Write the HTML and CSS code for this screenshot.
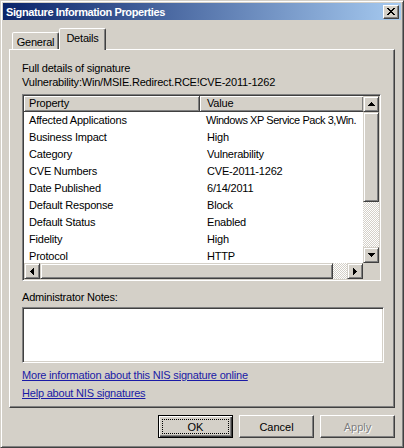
FILE: index.html
```html
<!DOCTYPE html>
<html lang="en">
<head>
  <meta charset="UTF-8" />
  <title>Signature Information Properties</title>
  <link rel="stylesheet" href="styles.css">
</head>
<body>
  <div class="window">
    <div class="titlebar">
      <span class="title">Signature Information Properties</span>
      <button class="close-btn" aria-label="Close">
        <svg width="8" height="7" viewBox="0 0 8 7" shape-rendering="crispEdges">
          <path d="M0 0h2v1h-2zM6 0h2v1h-2zM1 1h2v1h-2zM5 1h2v1h-2zM2 2h4v1h-4zM3 3h2v1h-2zM2 4h4v1h-4zM1 5h2v1h-2zM5 5h2v1h-2zM0 6h2v1h-2zM6 6h2v1h-2z" fill="#000"/>
        </svg>
      </button>
    </div>

    <div class="dialog">
      <div class="tabs">
        <div class="tab">General</div>
        <div class="tab active">Details</div>
      </div>

      <div class="panel">
        <p class="intro">Full details of signature<br>Vulnerability:Win/MSIE.Redirect.RCE!CVE-2011-1262</p>

        <div class="listview">
          <div class="list-body">
            <div class="list-row list-head">
              <div class="cell prop">Property</div>
              <div class="cell val">Value</div>
            </div>
            <div class="list-row"><div class="cell prop">Affected Applications</div><div class="cell val tight">Windows XP Service Pack 3,Win.</div></div>
            <div class="list-row"><div class="cell prop">Business Impact</div><div class="cell val">High</div></div>
            <div class="list-row"><div class="cell prop">Category</div><div class="cell val">Vulnerability</div></div>
            <div class="list-row"><div class="cell prop">CVE Numbers</div><div class="cell val">CVE-2011-1262</div></div>
            <div class="list-row"><div class="cell prop">Date Published</div><div class="cell val">6/14/2011</div></div>
            <div class="list-row"><div class="cell prop">Default Response</div><div class="cell val">Block</div></div>
            <div class="list-row"><div class="cell prop">Default Status</div><div class="cell val">Enabled</div></div>
            <div class="list-row"><div class="cell prop">Fidelity</div><div class="cell val">High</div></div>
            <div class="list-row"><div class="cell prop">Protocol</div><div class="cell val">HTTP</div></div>
          </div>

          <div class="vscroll">
            <div class="sb-btn">
              <svg width="7" height="4" viewBox="0 0 7 4" shape-rendering="crispEdges"><path d="M3 0h1v1h-1zM2 1h3v1h-3zM1 2h5v1h-5zM0 3h7v1h-7z" fill="#000"/></svg>
            </div>
            <div class="sb-thumb v"></div>
            <div class="sb-track"></div>
            <div class="sb-btn">
              <svg width="7" height="4" viewBox="0 0 7 4" shape-rendering="crispEdges"><path d="M0 0h7v1h-7zM1 1h5v1h-5zM2 2h3v1h-3zM3 3h1v1h-1z" fill="#000"/></svg>
            </div>
          </div>

          <div class="hscroll">
            <div class="sb-btn">
              <svg width="4" height="7" viewBox="0 0 4 7" shape-rendering="crispEdges"><path d="M0 3h1v1h-1zM1 2h1v3h-1zM2 1h1v5h-1zM3 0h1v7h-1z" fill="#000"/></svg>
            </div>
            <div class="sb-thumb h"></div>
            <div class="sb-track"></div>
            <div class="sb-btn">
              <svg width="4" height="7" viewBox="0 0 4 7" shape-rendering="crispEdges"><path d="M0 0h1v7h-1zM1 1h1v5h-1zM2 2h1v3h-1zM3 3h1v1h-1z" fill="#000"/></svg>
            </div>
          </div>

          <div class="sb-corner"></div>
        </div>

        <div class="notes-label">Administrator Notes:</div>
        <div class="notes"></div>

        <a class="link first" href="#">More information about this NIS signature online</a>
        <a class="link" href="#">Help about NIS signatures</a>
      </div>

      <div class="buttons">
        <button class="btn default"><span>OK</span></button>
        <button class="btn"><span>Cancel</span></button>
        <button class="btn disabled"><span>Apply</span></button>
      </div>
    </div>
  </div>
</body>
</html>
```

FILE: styles.css
```css
:root {
  --face: #d4d0c8;
  --light: #ffffff;
  --shadow: #808080;
  --dark: #404040;
  --link: #1a1aa6;
}

* {
  margin: 0;
  padding: 0;
  box-sizing: border-box;
}

body {
  font-family: "Liberation Sans", Arial, sans-serif;
  font-size: 11px;
  line-height: 14px;
  letter-spacing: -0.2px;
  color: #000;
  background: var(--face);
}

.window {
  width: 404px;
  height: 448px;
  padding: 2px;
  background: var(--face);
  border: 1px solid;
  border-color: var(--face) var(--dark) var(--dark) var(--face);
  box-shadow: inset 1px 1px var(--light), inset -1px -1px var(--shadow);
}

.titlebar {
  display: flex;
  align-items: center;
  justify-content: space-between;
  height: 17px;
  padding: 0 2px 0 3px;
  background: linear-gradient(to right, #0a246a, #a6caf0);
}

.title {
  color: #fff;
  font-weight: bold;
  letter-spacing: -0.4px;
}

.close-btn {
  display: flex;
  align-items: center;
  justify-content: center;
  width: 16px;
  height: 14px;
  background: var(--face);
  border: 1px solid;
  border-color: var(--light) var(--dark) var(--dark) var(--light);
  box-shadow: inset -1px -1px var(--shadow);
}

.dialog {
  padding: 0 6px;
}

/* tab strip */
.tabs {
  display: flex;
  align-items: flex-end;
  height: 29px;
  padding-top: 8px;
}

.tab {
  width: 47px;
  height: 17px;
  line-height: 18px;
  text-align: center;
  background: var(--face);
  border: 1px solid;
  border-bottom: none;
  border-color: var(--light) var(--dark) transparent var(--light);
  border-radius: 2px 2px 0 0;
  box-shadow: inset -1px 0 var(--shadow);
}

.tab:first-child {
  margin-left: 3px;
}

.tab.active {
  position: relative;
  z-index: 1;
  height: 22px;
  margin-bottom: -1px;
  line-height: 18px;
}

/* property page */
.panel {
  height: 359px;
  padding: 11px 8px 0 12px;
  background: var(--face);
  border: 1px solid;
  border-color: var(--light) var(--dark) var(--dark) var(--light);
  box-shadow: inset -1px -1px var(--shadow);
}

.intro {
  line-height: 14px;
}

.listview {
  display: grid;
  grid-template-columns: 1fr 16px;
  grid-template-rows: 1fr 16px;
  width: 359px;
  height: 187px;
  margin-top: 5px;
  background: #fff;
  border: 1px solid;
  border-color: var(--shadow) var(--light) var(--light) var(--shadow);
  box-shadow: inset 1px 1px var(--dark), inset -1px -1px var(--face);
  padding: 1px;
}

.list-body {
  overflow: hidden;
  background: #fff;
}

.list-row {
  display: flex;
  height: 17px;
  line-height: 17px;
  white-space: nowrap;
}

.cell {
  overflow: hidden;
}

.cell.prop {
  width: 176px;
  flex: none;
  padding-left: 5px;
}

.cell.val {
  flex: 1;
  padding-left: 7px;
}

.cell.tight {
  padding-left: 6px;
  letter-spacing: -0.45px;
}

.list-head {
  height: 16px;
  line-height: 15px;
}

.list-head .cell {
  background: var(--face);
  border-right: 1px solid var(--dark);
  border-bottom: 1px solid var(--dark);
  box-shadow: inset 1px 1px var(--light), inset -1px -1px var(--shadow);
}

.list-head .cell.val {
  border-right: none;
}

/* scroll bars */
.vscroll,
.hscroll {
  display: flex;
}

.vscroll {
  flex-direction: column;
}

.sb-btn,
.sb-thumb {
  display: flex;
  align-items: center;
  justify-content: center;
  flex: none;
  width: 16px;
  height: 16px;
  background: var(--face);
  border: 1px solid;
  border-color: var(--face) var(--dark) var(--dark) var(--face);
  box-shadow: inset 1px 1px var(--light), inset -1px -1px var(--shadow);
}

.sb-thumb.v {
  height: 90px;
}

.sb-thumb.h {
  width: 293px;
}

.sb-track {
  flex: 1;
  background-image: conic-gradient(#fff 25%, var(--face) 0 50%, #fff 0 75%, var(--face) 0);
  background-size: 2px 2px;
}

.sb-corner {
  background: var(--face);
}

.notes-label {
  margin-top: 9px;
}

.notes {
  width: 362px;
  height: 56px;
  margin-top: 3px;
  background: #fff;
  border: 1px solid;
  border-color: var(--shadow) var(--light) var(--light) var(--shadow);
  box-shadow: inset 1px 1px var(--dark), inset -1px -1px var(--face);
}

.link {
  display: table;
  margin-top: 4px;
  color: var(--link);
  text-decoration: underline;
}

.link.first {
  margin-top: 5px;
}

/* dialog buttons */
.buttons {
  display: flex;
  justify-content: flex-end;
  gap: 6px;
  margin-top: 7px;
}

.btn {
  display: flex;
  width: 75px;
  height: 23px;
  padding: 3px;
  font: inherit;
  color: #000;
  background: var(--face);
  border: 1px solid;
  border-color: var(--light) var(--dark) var(--dark) var(--light);
  box-shadow: inset -1px -1px var(--shadow);
}

.btn span {
  display: flex;
  flex: 1;
  align-items: center;
  justify-content: center;
  border: 1px solid transparent;
}

.btn.default {
  border-color: #000;
  box-shadow: inset 1px 1px var(--light), inset -1px -1px var(--dark), inset -2px -2px var(--shadow);
}

.btn.default span {
  border: 1px dotted #000;
}

.btn.disabled {
  color: var(--shadow);
  text-shadow: 1px 1px #fff;
}
```
